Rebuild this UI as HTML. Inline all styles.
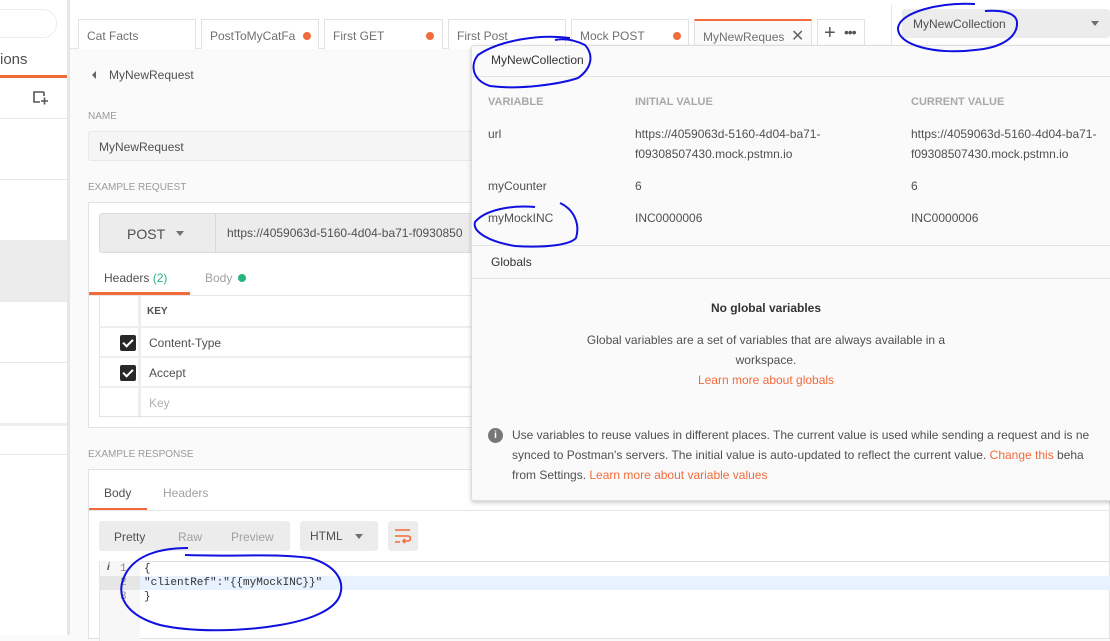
<!DOCTYPE html>
<html><head><meta charset="utf-8"><style>
*{box-sizing:border-box;margin:0;padding:0}
body{width:1110px;height:635px;overflow:hidden;background:#fafafa;font-family:"Liberation Sans",sans-serif;font-size:12px;color:#505050;position:relative}
.a{position:absolute}
.t{position:absolute;white-space:nowrap}
.tab{position:absolute;top:19px;height:30px;border:1px solid #e2e2e2;border-bottom:none;background:#fff;font-size:12px;color:#707070;padding:9px 8px}
.dot{position:absolute;width:8px;height:8px;border-radius:50%;background:#f26b3a;top:12px}
.lbl{font-size:10px;color:#9a9a9a}
.cb{position:absolute;left:120px;width:16px;height:16px;background:#282828;border-radius:2px}
.cb:after{content:"";position:absolute;left:5px;top:2px;width:4px;height:8px;border:solid #fff;border-width:0 2px 2px 0;transform:rotate(45deg)}
.or{color:#f26b3a}
</style></head><body>
<div class="a" style="left:0;top:0;width:67px;height:635px;background:#fff"></div>
<div class="a" style="left:67px;top:0;width:3px;height:635px;background:#e6e6e6"></div>
<div class="a" style="left:-20px;top:9px;width:77px;height:29px;border:1px solid #ececec;border-radius:14px"></div>
<div class="t" style="left:0;top:51px;font-size:15px;color:#505050">ions</div>
<div class="a" style="left:0;top:75px;width:67px;height:3px;background:#f26b3a"></div>
<svg class="a" style="left:32px;top:90px" width="18" height="18" viewBox="0 0 18 18"><path d="M12 2H2v10h6M2 2" fill="none" stroke="#555" stroke-width="1.6"/><path d="M12 2v4M9 11h7M12.5 7.5v7" stroke="#555" stroke-width="1.6"/></svg>
<div class="a" style="left:0;top:118px;width:67px;height:1px;background:#e8e8e8"></div>
<div class="a" style="left:0;top:179px;width:67px;height:1px;background:#e8e8e8"></div>
<div class="a" style="left:0;top:240px;width:67px;height:62px;background:#ececec"></div>
<div class="a" style="left:0;top:362px;width:67px;height:1px;background:#e8e8e8"></div>
<div class="a" style="left:0;top:423px;width:67px;height:3px;background:#eee"></div>
<div class="a" style="left:0;top:454px;width:67px;height:1px;background:#e8e8e8"></div>
<div class="a" style="left:70px;top:0;width:1040px;height:49px;background:#fff;border-bottom:1px solid #e6e6e6"></div>
<div class="tab" style="left:78px;width:118px">Cat Facts</div>
<div class="tab" style="left:201px;width:118px">PostToMyCatFa<div class="dot" style="left:101px"></div></div>
<div class="tab" style="left:324px;width:119px">First GET<div class="dot" style="left:101px"></div></div>
<div class="tab" style="left:448px;width:118px">First Post</div>
<div class="tab" style="left:571px;width:118px">Mock POST<div class="dot" style="left:101px"></div></div>
<div class="tab" style="left:694px;width:118px;border-top:2px solid #f26b3a;height:31px;background:#fafafa">MyNewReques<span class="t" style="left:96px;top:5px;font-size:16px;color:#666">✕</span></div>
<div class="tab" style="left:817px;width:48px;padding:0"><span class="t" style="left:6px;top:2px;font-size:20px;color:#555">+</span><span class="t" style="left:26px;top:4px;font-size:14px;color:#555;letter-spacing:-1px">•••</span></div>
<div class="a" style="left:891px;top:5px;width:1px;height:40px;background:#e6e6e6"></div>
<div class="a" style="left:902px;top:9px;width:208px;height:29px;background:#ececec;border-radius:3px"></div>
<div class="t" style="left:913px;top:17px;font-size:12px;color:#505050">MyNewCollection</div>
<div class="a" style="left:1091px;top:21px;border:4px solid transparent;border-top:5px solid #707070"></div>
<div class="a" style="left:92px;top:71px;border:4px solid transparent;border-right:4px solid #666;border-left:none"></div>
<div class="t" style="left:109px;top:68px;font-size:12px;color:#505050">MyNewRequest</div>
<div class="t lbl" style="left:88px;top:111px">NAME</div>
<div class="a" style="left:88px;top:131px;width:400px;height:30px;border:1px solid #e8e8e8;border-radius:3px;background:#f5f5f5"></div>
<div class="t" style="left:99px;top:140px">MyNewRequest</div>
<div class="t lbl" style="left:88px;top:182px">EXAMPLE REQUEST</div>
<div class="a" style="left:88px;top:202px;width:400px;height:226px;border:1px solid #e2e2e2;background:#fff"></div>
<div class="a" style="left:99px;top:213px;width:390px;height:40px;border:1px solid #dcdcdc;border-radius:3px;background:#ececec"></div>
<div class="a" style="left:215px;top:214px;width:1px;height:38px;background:#d8d8d8"></div>
<div class="t" style="left:127px;top:226px;font-size:14px;color:#505050">POST</div>
<div class="a" style="left:176px;top:231px;border:4px solid transparent;border-top:5px solid #707070"></div>
<div class="t" style="left:227px;top:226px;font-size:12px">https://4059063d-5160-4d04-ba71-f0930850</div>
<div class="t" style="left:104px;top:271px">Headers <span style="color:#26b47f">(2)</span></div>
<div class="t" style="left:205px;top:271px;color:#a0a0a0">Body</div>
<div class="a" style="left:238px;top:274px;width:8px;height:8px;border-radius:50%;background:#26b47f"></div>
<div class="a" style="left:89px;top:292px;width:101px;height:3px;background:#f26b3a"></div>
<div class="a" style="left:89px;top:295px;width:400px;height:1px;background:#e6e6e6"></div>
<div class="a" style="left:99px;top:296px;width:1px;height:122px;background:#e4e4e4"></div>
<div class="a" style="left:138px;top:296px;width:3px;height:122px;background:#eee"></div>
<div class="a" style="left:99px;top:326px;width:390px;height:2px;background:#eee"></div>
<div class="a" style="left:99px;top:356px;width:390px;height:2px;background:#eee"></div>
<div class="a" style="left:99px;top:386px;width:390px;height:2px;background:#eee"></div>
<div class="a" style="left:99px;top:416px;width:390px;height:1px;background:#e4e4e4"></div>
<div class="t" style="left:147px;top:306px;font-size:10px;font-weight:bold;color:#505050">KEY</div>
<div class="cb" style="top:335px"></div><div class="t" style="left:149px;top:336px">Content-Type</div>
<div class="cb" style="top:365px"></div><div class="t" style="left:149px;top:366px">Accept</div>
<div class="t" style="left:149px;top:396px;color:#b0b0b0">Key</div>
<div class="t lbl" style="left:88px;top:449px">EXAMPLE RESPONSE</div>
<div class="a" style="left:88px;top:469px;width:1022px;height:170px;border:1px solid #e2e2e2;background:#fff"></div>
<div class="t" style="left:104px;top:486px">Body</div>
<div class="t" style="left:163px;top:486px;color:#a0a0a0">Headers</div>
<div class="a" style="left:89px;top:508px;width:58px;height:3px;background:#f26b3a"></div>
<div class="a" style="left:89px;top:510px;width:1021px;height:1px;background:#e6e6e6"></div>
<div class="a" style="left:99px;top:521px;width:191px;height:30px;background:#ececec;border-radius:3px"></div>
<div class="t" style="left:114px;top:530px">Pretty</div>
<div class="t" style="left:178px;top:530px;color:#a0a0a0">Raw</div>
<div class="t" style="left:231px;top:530px;color:#a0a0a0">Preview</div>
<div class="a" style="left:300px;top:521px;width:78px;height:30px;background:#ececec;border-radius:3px"></div>
<div class="t" style="left:310px;top:529px">HTML</div>
<div class="a" style="left:355px;top:534px;border:4px solid transparent;border-top:5px solid #707070"></div>
<div class="a" style="left:388px;top:521px;width:30px;height:30px;background:#ececec;border-radius:3px"></div>
<svg class="a" style="left:394px;top:527px" width="18" height="18" viewBox="0 0 18 18"><path d="M1 3h15M1 9h13a2.5 2.5 0 010 5H9M1 15h5M11 12l-2 2 2 2" fill="none" stroke="#f26b3a" stroke-width="1.6"/></svg>
<div class="a" style="left:99px;top:561px;width:1011px;height:1px;background:#dedede"></div>
<div class="a" style="left:99px;top:561px;width:41px;height:80px;background:#f7f7f7;border-left:1px solid #e4e4e4"></div>
<div class="a" style="left:99px;top:576px;width:41px;height:14px;background:#e6e6e6"></div>
<div class="a" style="left:140px;top:576px;width:970px;height:14px;background:#e8f2fe"></div>
<div class="t" style="left:107px;top:562px;font-size:10px;font-style:italic;font-weight:bold">i</div>
<div style="font-family:'Liberation Mono',monospace;font-size:11px;color:#888">
<div class="t" style="left:120px;top:563px">1</div><div class="t" style="left:120px;top:577px">2</div><div class="t" style="left:120px;top:591px">3</div></div>
<div style="font-family:'Liberation Mono',monospace;font-size:11px;color:#333">
<div class="t" style="left:144px;top:563px">{</div><div class="t" style="left:144px;top:577px">"clientRef":"{{myMockINC}}"</div><div class="t" style="left:144px;top:591px">}</div></div>
<div class="a" style="left:471px;top:45px;width:645px;height:456px;background:#fafafa;border:1px solid #ddd;border-radius:3px;box-shadow:0 2px 4px rgba(0,0,0,.2)"></div>
<div class="t" style="left:491px;top:53px;font-size:12px;color:#333">MyNewCollection</div>
<div class="a" style="left:472px;top:76px;width:638px;height:1px;background:#e4e4e4"></div>
<div style="font-size:11px;color:#a8a8a8;font-weight:bold">
<div class="t" style="left:488px;top:96px">VARIABLE</div><div class="t" style="left:635px;top:96px">INITIAL VALUE</div><div class="t" style="left:911px;top:96px">CURRENT VALUE</div></div>
<div style="font-size:12px;color:#505050;line-height:20px">
<div class="t" style="left:488px;top:124px">url</div>
<div class="t" style="left:635px;top:124px">https://4059063d-5160-4d04-ba71-<br>f09308507430.mock.pstmn.io</div>
<div class="t" style="left:911px;top:124px">https://4059063d-5160-4d04-ba71-<br>f09308507430.mock.pstmn.io</div>
<div class="t" style="left:488px;top:176px">myCounter</div><div class="t" style="left:635px;top:176px">6</div><div class="t" style="left:911px;top:176px">6</div>
<div class="t" style="left:488px;top:208px">myMockINC</div><div class="t" style="left:635px;top:208px">INC0000006</div><div class="t" style="left:911px;top:208px">INC0000006</div>
</div>
<div class="a" style="left:472px;top:245px;width:638px;height:1px;background:#e4e4e4"></div>
<div class="t" style="left:491px;top:255px;color:#333">Globals</div>
<div class="a" style="left:472px;top:278px;width:638px;height:1px;background:#e4e4e4"></div>
<div class="t" style="left:766px;top:301px;transform:translateX(-50%);color:#333;font-weight:bold">No global variables</div>
<div class="a" style="left:566px;top:330px;width:400px;text-align:center;line-height:20px;color:#505050">Global variables are a set of variables that are always available in a<br>workspace.<br><span class="or">Learn more about globals</span></div>
<div class="a" style="left:488px;top:428px;width:15px;height:15px;border-radius:50%;background:#777;color:#fff;font-size:10px;font-weight:bold;text-align:center;line-height:15px">i</div>
<div class="t" style="left:512px;top:425px;line-height:20px;color:#505050">Use variables to reuse values in different places. The current value is used while sending a request and is ne<br>synced to Postman's servers. The initial value is auto-updated to reflect the current value. <span class="or">Change this</span> beha<br>from Settings. <span class="or">Learn more about variable values</span></div>
<svg class="a" style="left:0;top:0" width="1110" height="635" viewBox="0 0 1110 635" fill="none" stroke="#1010e0" stroke-width="2">
<path d="M975 4C940 2 900 12 898 28C897 45 935 55 975 50C1000 48 1018 38 1017 22C1016 12 1000 10 985 11"/>
<path d="M570 38C540 34 500 40 478 55C470 65 472 80 490 86C520 90 560 84 578 78C592 68 594 55 585 45C575 40 565 38 555 40"/>
<path d="M535 207C510 205 485 210 475 222C472 232 490 242 515 246C545 248 570 245 576 238C580 225 575 210 560 203"/>
<path d="M188 548C160 548 135 555 125 575C115 595 125 615 160 625C190 632 240 632 280 625C310 620 335 610 340 595C345 580 335 565 310 558C270 553 240 557 185 555"/>
</svg>
</body></html>
